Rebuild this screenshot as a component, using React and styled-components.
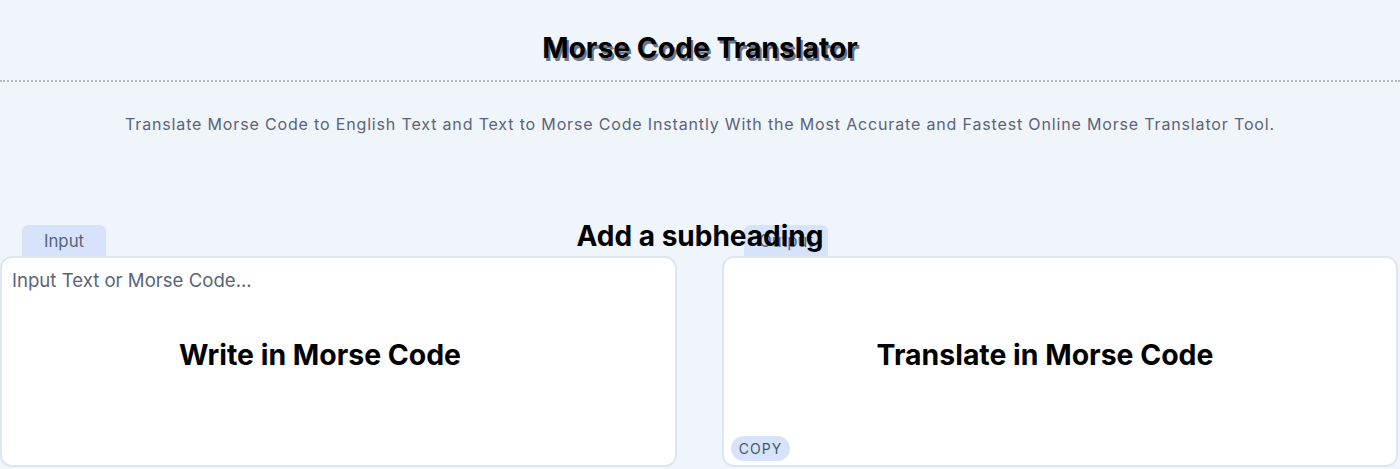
import React from "react";
import styled, { createGlobalStyle } from "styled-components";

const GlobalStyle = createGlobalStyle`
  body {
    margin: 0;
    background: #f0f4fb;
    font-family: Inter, "Liberation Sans", Arial, sans-serif;
  }
`;

const Page = styled.div`
  width: 1400px;
  height: 469px;
  overflow: hidden;
  background: #f0f4fb;
`;

const Header = styled.header`
  padding: 31px 0 15px;
  border-bottom: 2px dotted #b3b8c2;
  text-align: center;
`;

const Title = styled.h1`
  margin: 0;
  font-size: 28.3px;
  line-height: 34px;
  font-weight: 700;
  color: #000000;
  text-shadow: 2px 3px 0 #6b7489;
`;

const Subtitle = styled.p`
  margin: 30px 0 0;
  text-align: center;
  font-size: 16px;
  line-height: 24px;
  letter-spacing: 0.84px;
  color: #5a6478;
`;

const Section = styled.section`
  position: relative;
  margin-top: 89px;
  display: grid;
  grid-template-columns: 677px 676px;
  column-gap: 45px;
`;

const Subheading = styled.h2`
  position: absolute;
  top: -5px;
  left: 0;
  right: 0;
  margin: 0;
  text-align: center;
  font-size: 28px;
  line-height: 32px;
  font-weight: 700;
  color: #000000;
  z-index: 2;
`;

const Column = styled.div`
  display: flex;
  flex-direction: column;
`;

const Tab = styled.div`
  width: 84px;
  height: 31px;
  margin-left: 22px;
  display: flex;
  align-items: center;
  justify-content: center;
  background: #d6e3fa;
  border-radius: 6px 6px 0 0;
  font-size: 16.8px;
  color: #5a6478;
`;

const Panel = styled.div`
  position: relative;
  box-sizing: border-box;
  height: 211px;
  background: #ffffff;
  border: 2px solid #dfe6f1;
  border-radius: 12px;
  display: flex;
  flex-direction: column;
  padding: ${(p) => (p.$output ? "0 7px 4px" : "0")};
`;

const Input = styled.textarea`
  flex: 1;
  border: none;
  outline: none;
  resize: none;
  background: transparent;
  padding: 11px 10px;
  font-family: Inter, "Liberation Sans", Arial, sans-serif;
  font-size: 18.6px;
  line-height: 22px;
  color: #2d3748;
  border-radius: 12px;

  &::placeholder {
    color: #5a6478;
  }
`;

const Output = styled.div`
  flex: 1;
`;

const PanelHeading = styled.h3`
  position: absolute;
  top: 80px;
  left: 0;
  right: ${(p) => (p.$output ? "30px" : "37px")};
  margin: 0;
  text-align: center;
  font-size: 28.4px;
  line-height: 34px;
  font-weight: 700;
  color: #000000;
  pointer-events: none;
`;

const CopyButton = styled.button`
  align-self: flex-start;
  width: 59px;
  height: 25px;
  padding: 0;
  border: none;
  border-radius: 13px;
  background: #d6e3fa;
  color: #4a5568;
  font-family: Inter, "Liberation Sans", Arial, sans-serif;
  font-size: 14px;
  letter-spacing: 1px;
  cursor: pointer;
`;

export default function App() {
  return (
    <Page>
      <GlobalStyle />
      <Header>
        <Title>Morse Code Translator</Title>
      </Header>
      <Subtitle>
        Translate Morse Code to English Text and Text to Morse Code Instantly
        With the Most Accurate and Fastest Online Morse Translator Tool.
      </Subtitle>
      <Section>
        <Subheading>Add a subheading</Subheading>
        <Column>
          <Tab>Input</Tab>
          <Panel>
            <Input placeholder="Input Text or Morse Code..." />
            <PanelHeading>Write in Morse Code</PanelHeading>
          </Panel>
        </Column>
        <Column>
          <Tab>Output</Tab>
          <Panel $output>
            <Output />
            <PanelHeading $output>Translate in Morse Code</PanelHeading>
            <CopyButton>COPY</CopyButton>
          </Panel>
        </Column>
      </Section>
    </Page>
  );
}
